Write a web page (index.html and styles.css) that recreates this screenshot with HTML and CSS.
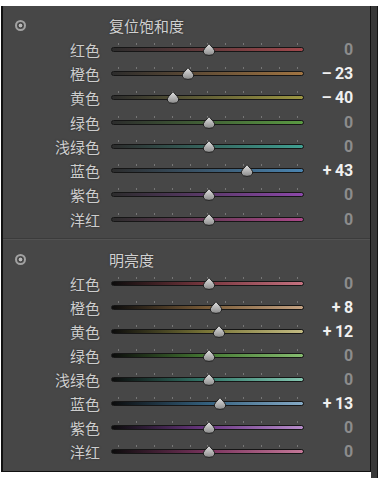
FILE: index.html
```html
<!DOCTYPE html>
<html lang="zh-CN">
<head>
    <meta charset="UTF-8">
    <meta name="viewport" content="width=device-width, initial-scale=1.0">
    <title>HSL 调整</title>
    <link rel="stylesheet" href="styles.css">
</head>
<body>
    <div class="frame">
        <div class="panel">
            <!-- Saturation -->
            <div class="section sat">
                <div class="section-head">
                    <span class="target-icon"></span>
                    <span class="section-title">复位饱和度</span>
                </div>
                <div class="rows" id="satRows"></div>
            </div>

            <div class="divider"></div>

            <!-- Luminance -->
            <div class="section lum">
                <div class="section-head">
                    <span class="target-icon"></span>
                    <span class="section-title">明亮度</span>
                </div>
                <div class="rows" id="lumRows"></div>
            </div>
        </div>
        <div class="scroll-strip"></div>
    </div>

    <script>
        // Slider values per colour channel
        const channels = [
            { key: 'red', label: '红色' },
            { key: 'orange', label: '橙色' },
            { key: 'yellow', label: '黄色' },
            { key: 'green', label: '绿色' },
            { key: 'aqua', label: '浅绿色' },
            { key: 'blue', label: '蓝色' },
            { key: 'purple', label: '紫色' },
            { key: 'magenta', label: '洋红' }
        ];
        const saturation = [0, -23, -40, 0, 0, 43, 0, 0];
        const luminance = [0, 8, 12, 0, 0, 13, 0, 0];

        const thumbSvg = '<svg width="14" height="13" viewBox="0 0 14 13">' +
            '<defs><linearGradient id="tg" x1="0" y1="0" x2="0" y2="1">' +
            '<stop offset="0" stop-color="#e4e4e4"/><stop offset="1" stop-color="#8a8a8a"/></linearGradient></defs>' +
            '<path d="M7 0.6 L11.4 5.6 Q13.4 7.8 12.4 10 Q11.2 12.4 7 12.4 Q2.8 12.4 1.6 10 Q0.6 7.8 2.6 5.6 Z" fill="url(#tg)" stroke="#1e1e1e" stroke-width="1"/>' +
            '</svg>';

        function formatValue(v) {
            if (v > 0) return '+ ' + v;
            if (v < 0) return '\u2013 ' + Math.abs(v);
            return '0';
        }

        function buildRows(containerId, prefix, values) {
            const container = document.getElementById(containerId);
            channels.forEach(function(ch, i) {
                const v = values[i];
                const row = document.createElement('div');
                row.className = 'row';

                let ticks = '';
                for (let t = 0; t < 11; t++) ticks += '<span class="tick"></span>';

                // thumb centre: ticks run from 7px to 186px across -100..100
                const left = 7 + (v + 100) / 200 * 179 - 6;

                row.innerHTML =
                    '<span class="label">' + ch.label + '</span>' +
                    '<div class="slider">' +
                        '<div class="ticks">' + ticks + '</div>' +
                        '<div class="track ' + prefix + '-' + ch.key + '"></div>' +
                        '<span class="thumb" style="left:' + left.toFixed(1) + 'px">' + thumbSvg + '</span>' +
                    '</div>' +
                    '<span class="value' + (v === 0 ? ' zero' : '') + '">' + formatValue(v) + '</span>';
                container.appendChild(row);
            });
        }

        buildRows('satRows', 'sat', saturation);
        buildRows('lumRows', 'lum', luminance);
    </script>
</body>
</html>
```

FILE: styles.css
```css
body {
    margin: 0;
    background-color: #ffffff;
    font-family: "Noto Sans CJK SC", "Noto Sans", sans-serif;
}
.frame {
    display: flex;
    margin: 6px 0 0 1px;
    height: 472px;
}
.panel {
    width: 367px;
    height: 465px;
    background-color: #474747;
    border-left: 2px solid #111;
    border-right: 1px solid #111;
    border-bottom: 1px solid #111;
}
.scroll-strip {
    width: 6px;
    background-color: #383838;
    border-right: 1px solid #151515;
}
.section-head {
    display: flex;
    align-items: center;
    height: 24px;
}
.sat .section-head {
    margin-top: 7px;
}
.lum .section-head {
    height: 23px;
}
.target-icon {
    width: 7px;
    height: 7px;
    margin-left: 12px;
    border: 2px solid #a2a2a2;
    border-radius: 50%;
    background: radial-gradient(circle, #b8b8b8 0 1.6px, transparent 2.2px);
}
.section-title {
    margin-left: 83px;
    font-size: 15px;
    color: #d0d0d0;
    text-shadow: 0 0 2px #2a2a2a;
}
.row {
    display: flex;
    align-items: center;
    height: 24px;
}
.sat .row {
    height: 24.3px;
}
.label {
    width: 97px;
    text-align: right;
    font-size: 15px;
    color: #cdcdcd;
    text-shadow: 0 0 2px #2a2a2a;
}
.slider {
    position: relative;
    width: 193px;
    height: 24px;
    margin-left: 11px;
    padding-bottom: 4px;
    box-sizing: border-box;
    display: flex;
    flex-direction: column;
    justify-content: center;
}
.ticks {
    display: flex;
    justify-content: space-between;
    height: 2px;
    margin: 0 6px 2px 7px;
}
.tick {
    width: 1px;
    background-color: #767676;
}
.track {
    height: 5px;
    box-sizing: border-box;
    border: 1px solid #161616;
    border-radius: 3px;
}
.thumb {
    position: absolute;
    top: 5.5px;
    width: 14px;
    height: 13px;
    line-height: 0;
}
.value {
    width: 49px;
    text-align: right;
    font-family: "Liberation Sans Narrow", "Roboto", sans-serif;
    font-size: 16px;
    font-weight: 700;
    color: #f0f0f0;
    letter-spacing: -0.2px;
}
.value.zero {
    color: #8c8c8c;
}
.divider {
    margin-top: 7px;
    margin-bottom: 8px;
    border-top: 1px solid #3b3b3b;
    border-bottom: 1px solid #525252;
}

/* saturation tracks: grey to full colour */
.sat-red { background: linear-gradient(to right, #2c2c2c, #a0484c); }
.sat-orange { background: linear-gradient(to right, #2c2c2c, #a07442); }
.sat-yellow { background: linear-gradient(to right, #2c2c2c, #9c9642); }
.sat-green { background: linear-gradient(to right, #2c2c2c, #5a9a42); }
.sat-aqua { background: linear-gradient(to right, #2c2c2c, #40a092); }
.sat-blue { background: linear-gradient(to right, #2c2c2c, #4a84b0); }
.sat-purple { background: linear-gradient(to right, #2c2c2c, #8c48aa); }
.sat-magenta { background: linear-gradient(to right, #2c2c2c, #aa4888); }

/* luminance tracks: black to light colour */
.lum-red { background: linear-gradient(to right, #0c0c0c, #7a3840 50%, #c47280); }
.lum-orange { background: linear-gradient(to right, #0c0c0c, #7a5c38 50%, #c4a282); }
.lum-yellow { background: linear-gradient(to right, #0c0c0c, #7a7638 50%, #c2ba82); }
.lum-green { background: linear-gradient(to right, #0c0c0c, #467a34 50%, #86bc70); }
.lum-aqua { background: linear-gradient(to right, #0c0c0c, #347a6c 50%, #84c6b0); }
.lum-blue { background: linear-gradient(to right, #0c0c0c, #34607e 50%, #86aac6); }
.lum-purple { background: linear-gradient(to right, #0c0c0c, #6c3884 50%, #b68cca); }
.lum-magenta { background: linear-gradient(to right, #0c0c0c, #7a345e 50%, #c47898); }
```
